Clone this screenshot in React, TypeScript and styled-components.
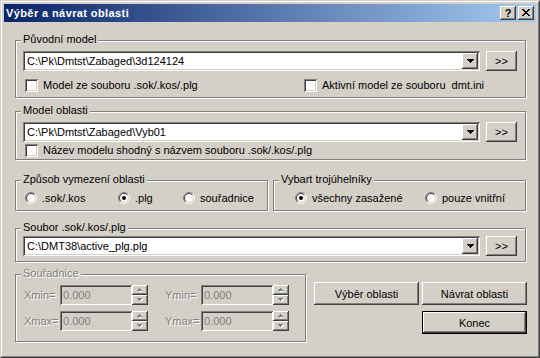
import React from "react";
import styled, { createGlobalStyle } from "styled-components";

const FACE = "#d4d0c8";
const SHADOW = "#808080";
const DARK = "#404040";

const raised = `box-shadow: inset -1px -1px ${DARK}, inset 1px 1px #fff, inset -2px -2px ${SHADOW}, inset 2px 2px ${FACE};`;
const sunken = `box-shadow: inset 1px 1px ${SHADOW}, inset -1px -1px #fff, inset 2px 2px ${DARK}, inset -2px -2px ${FACE};`;
const etchedText = `color: ${SHADOW}; text-shadow: 1px 1px 0 #fff;`;

const GlobalStyle = createGlobalStyle`
  html, body {
    margin: 0;
    padding: 0;
    background: ${FACE};
  }
  body {
    font-family: "Liberation Sans", Arial, sans-serif;
    font-size: 11px;
    color: #000;
  }
`;

const Window = styled.div`
  width: 540px;
  height: 358px;
  box-sizing: border-box;
  background: ${FACE};
  border: 1px solid;
  border-color: ${FACE} ${DARK} ${DARK} ${FACE};
`;

const Frame = styled.div`
  height: 100%;
  box-sizing: border-box;
  border: 1px solid;
  border-color: #fff ${SHADOW} ${SHADOW} #fff;
  padding: 2px;
  display: flex;
  flex-direction: column;
`;

const TitleBar = styled.div`
  height: 18px;
  flex: none;
  display: flex;
  align-items: center;
  padding: 0 2px;
  background: linear-gradient(to right, #0a246a, #a6caf0);
`;

const Title = styled.div`
  flex: 1;
  color: #fff;
  font-weight: bold;
  font-size: 11px;
  letter-spacing: 0.4px;
  white-space: nowrap;
`;

const CaptionButtons = styled.div`
  display: flex;
  gap: 2px;
`;

const CaptionButton = styled.div`
  width: 16px;
  height: 14px;
  box-sizing: border-box;
  background: ${FACE};
  ${raised}
  display: flex;
  align-items: center;
  justify-content: center;
  font-weight: bold;
  font-size: 11px;
  line-height: 14px;
  padding-bottom: 1px;
`;

const Body = styled.div`
  flex: 1;
  display: flex;
  flex-direction: column;
  padding: 18px 10px 0 11px;
`;

const Group = styled.div<{ $mt?: number; $pad: string; $w?: number }>`
  position: relative;
  box-sizing: border-box;
  flex: none;
  margin-top: ${(p) => p.$mt ?? 0}px;
  width: ${(p) => (p.$w ? `${p.$w}px` : "auto")};
  border: 1px solid ${SHADOW};
  box-shadow: 1px 1px 0 #fff, inset 1px 1px 0 #fff;
  padding: ${(p) => p.$pad};
`;

const Legend = styled.div<{ $disabled?: boolean }>`
  position: absolute;
  left: 5px;
  top: -8px;
  padding: 0 2px;
  line-height: 13px;
  background: ${FACE};
  white-space: nowrap;
  ${(p) => (p.$disabled ? etchedText : "")}
`;

const HalfRow = styled.div`
  display: flex;
  gap: 5px;
  margin-top: 20px;
`;

const FieldRow = styled.div`
  display: flex;
  align-items: center;
  gap: 6px;
`;

const Combo = styled.div`
  flex: 1;
  height: 20px;
  box-sizing: border-box;
  background: #fff;
  ${sunken}
  display: flex;
  align-items: center;
  padding: 2px;
`;

const ComboText = styled.div`
  flex: 1;
  padding-left: 2px;
  white-space: nowrap;
  overflow: hidden;
  line-height: 16px;
`;

const DropButton = styled.div`
  width: 16px;
  height: 16px;
  box-sizing: border-box;
  background: ${FACE};
  ${raised}
  display: flex;
  align-items: center;
  justify-content: center;
`;

const PushButton = styled.div<{ $w?: number; $h: number; $default?: boolean }>`
  width: ${(p) => (p.$w ? `${p.$w}px` : "auto")};
  height: ${(p) => p.$h}px;
  box-sizing: border-box;
  flex: none;
  background: ${FACE};
  display: flex;
  align-items: center;
  justify-content: center;
  white-space: nowrap;
  ${(p) =>
    p.$default
      ? `border: 1px solid #000; box-shadow: inset -1px -1px ${DARK}, inset 1px 1px #fff, inset -2px -2px ${SHADOW}, inset 2px 2px ${FACE};`
      : raised}
`;

const OptionRow = styled.div<{ $cols: string; $mt?: number; $pl?: number }>`
  display: grid;
  grid-template-columns: ${(p) => p.$cols};
  align-items: center;
  height: 14px;
  margin-top: ${(p) => p.$mt ?? 0}px;
  padding-left: ${(p) => p.$pl ?? 0}px;
`;

const Option = styled.div`
  display: flex;
  align-items: center;
  gap: 5px;
  white-space: nowrap;
`;

const CheckBox = styled.div`
  width: 13px;
  height: 13px;
  box-sizing: border-box;
  flex: none;
  background: #fff;
  ${sunken}
`;

const BottomRow = styled.div`
  display: flex;
  align-items: flex-start;
  gap: 8px;
  margin-top: 12px;
`;

const CoordGrid = styled.div`
  display: grid;
  grid-template-columns: 141px auto;
  row-gap: 6px;
  padding-left: 8px;
`;

const CoordField = styled.div`
  display: flex;
  align-items: center;
  height: 20px;
`;

const CoordLabel = styled.div`
  width: 36px;
  ${etchedText}
`;

const DisabledEdit = styled.div`
  width: 72px;
  height: 20px;
  box-sizing: border-box;
  background: ${FACE};
  ${sunken}
  color: ${SHADOW};
  padding: 0 3px;
  line-height: 20px;
`;

const Spin = styled.div`
  display: flex;
  flex-direction: column;
  width: 16px;
  height: 20px;
`;

const SpinHalf = styled.div`
  height: 10px;
  box-sizing: border-box;
  background: ${FACE};
  ${raised}
  display: flex;
  align-items: center;
  justify-content: center;
`;

const ButtonGrid = styled.div`
  display: grid;
  grid-template-columns: 105px 105px;
  column-gap: 3px;
  row-gap: 6px;
  margin-top: 8px;
`;

const CloseGlyph = () => {
  const rows = ["11000011", "01100110", "00111100", "00011000", "00111100", "01100110", "11000011"];
  return (
    <svg width="8" height="7" shapeRendering="crispEdges">
      {rows.map((r, y) =>
        r.split("").map((c, x) => (c === "1" ? <rect key={`${x}-${y}`} x={x} y={y} width="1" height="1" fill="#000" /> : null))
      )}
    </svg>
  );
};

const DownArrow = () => (
  <svg width="7" height="4" shapeRendering="crispEdges">
    <path d="M0 0H7V1H6V2H5V3H4V4H3V3H2V2H1V1H0Z" fill="#000" />
  </svg>
);

const SpinArrow = ({ up }: { up?: boolean }) => (
  <svg width="6" height="4" shapeRendering="crispEdges">
    {up ? (
      <>
        <path d="M2 1H3V2H4V3H1V2H2Z" fill="#fff" transform="translate(1 1)" />
        <path d="M2 0H3V1H4V2H5V3H0V2H1V1H2Z" fill={SHADOW} />
      </>
    ) : (
      <>
        <path d="M0 0H5V1H4V2H3V3H2V2H1V1H0Z" fill="#fff" transform="translate(1 1)" />
        <path d="M0 0H5V1H4V2H3V3H2V2H1V1H0Z" fill={SHADOW} />
      </>
    )}
  </svg>
);

const arc = (r: number, topLeft: boolean) => {
  const d = r * Math.SQRT1_2;
  const bl = `${6 - d} ${6 + d}`;
  const tr = `${6 + d} ${6 - d}`;
  return topLeft ? `M${bl} A${r} ${r} 0 0 1 ${tr}` : `M${tr} A${r} ${r} 0 0 1 ${bl}`;
};

const Radio = ({ checked }: { checked?: boolean }) => (
  <svg width="12" height="12" style={{ flex: "none" }}>
    <circle cx="6" cy="6" r="4.5" fill="#fff" />
    <path d={arc(5.5, true)} stroke={SHADOW} fill="none" />
    <path d={arc(5.5, false)} stroke="#fff" fill="none" />
    <path d={arc(4.5, true)} stroke={DARK} fill="none" />
    <path d={arc(4.5, false)} stroke={FACE} fill="none" />
    {checked && <circle cx="6" cy="6" r="2" fill="#000" />}
  </svg>
);

const ComboField = ({ value }: { value: string }) => (
  <FieldRow>
    <Combo>
      <ComboText>{value}</ComboText>
      <DropButton>
        <DownArrow />
      </DropButton>
    </Combo>
    <PushButton $w={31} $h={20}>
      &gt;&gt;
    </PushButton>
  </FieldRow>
);

const Coord = ({ label }: { label: string }) => (
  <CoordField>
    <CoordLabel>{label}</CoordLabel>
    <DisabledEdit>0.000</DisabledEdit>
    <Spin>
      <SpinHalf>
        <SpinArrow up />
      </SpinHalf>
      <SpinHalf>
        <SpinArrow />
      </SpinHalf>
    </Spin>
  </CoordField>
);

export default function App() {
  return (
    <>
      <GlobalStyle />
      <Window>
        <Frame>
          <TitleBar>
            <Title>Výběr a návrat oblasti</Title>
            <CaptionButtons>
              <CaptionButton>?</CaptionButton>
              <CaptionButton>
                <CloseGlyph />
              </CaptionButton>
            </CaptionButtons>
          </TitleBar>
          <Body>
            <Group $pad="10px 8px 5px 7px">
              <Legend>Původní model</Legend>
              <ComboField value="C:\Pk\Dmtst\Zabaged\3d124124" />
              <OptionRow $cols="279px auto" $mt={7} $pl={2}>
                <Option>
                  <CheckBox />
                  Model ze souboru .sok/.kos/.plg
                </Option>
                <Option>
                  <CheckBox />
                  Aktivní model ze souboru&nbsp; dmt.ini
                </Option>
              </OptionRow>
            </Group>

            <Group $mt={13} $pad="10px 8px 2px 7px">
              <Legend>Model oblasti</Legend>
              <ComboField value="C:\Pk\Dmtst\Zabaged\Vyb01" />
              <OptionRow $cols="auto" $mt={1} $pl={2}>
                <Option>
                  <CheckBox />
                  Název modelu shodný s názvem souboru .sok/.kos/.plg
                </Option>
              </OptionRow>
            </Group>

            <HalfRow>
              <Group $w={253} $pad="10px 0 5px 9px">
                <Legend>Způsob vymezení oblasti</Legend>
                <OptionRow $cols="93px 65px auto">
                  <Option>
                    <Radio />
                    .sok/.kos
                  </Option>
                  <Option>
                    <Radio checked />
                    .plg
                  </Option>
                  <Option>
                    <Radio />
                    souřadnice
                  </Option>
                </OptionRow>
              </Group>
              <Group $w={253} $pad="10px 0 5px 21px">
                <Legend>Vybart trojúhelníky</Legend>
                <OptionRow $cols="130px auto">
                  <Option>
                    <Radio checked />
                    všechny zasažené
                  </Option>
                  <Option>
                    <Radio />
                    pouze vnitřní
                  </Option>
                </OptionRow>
              </Group>
            </HalfRow>

            <Group $mt={17} $pad="7px 8px 5px 7px">
              <Legend>Soubor .sok/.kos/.plg</Legend>
              <ComboField value="C:\DMT38\active_plg.plg" />
            </Group>

            <BottomRow>
              <Group $w={291} $pad="10px 0 10px 0">
                <Legend $disabled>Souřadnice</Legend>
                <CoordGrid>
                  <Coord label="Xmin=" />
                  <Coord label="Ymin=" />
                  <Coord label="Xmax=" />
                  <Coord label="Ymax=" />
                </CoordGrid>
              </Group>
              <ButtonGrid>
                <PushButton $h={23}>Výběr oblasti</PushButton>
                <PushButton $h={23}>Návrat oblasti</PushButton>
                <div />
                <PushButton $h={23} $default>
                  Konec
                </PushButton>
              </ButtonGrid>
            </BottomRow>
          </Body>
        </Frame>
      </Window>
    </>
  );
}
